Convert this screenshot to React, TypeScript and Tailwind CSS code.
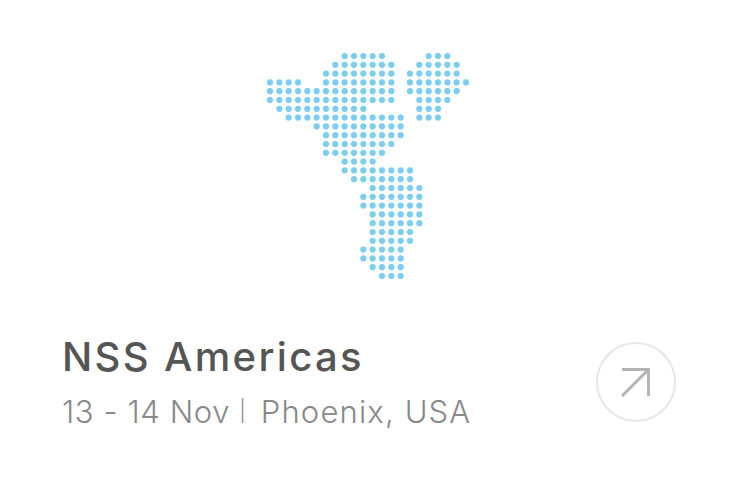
// dot map rows: [first column, last column] runs on the grid
const rows: [number, number][][] = [
  [[8, 12], [17, 19]],
  [[7, 13], [16, 20]],
  [[6, 13], [15, 20]],
  [[0, 3], [6, 13], [15, 21]],
  [[0, 13], [15, 20]],
  [[0, 13], [16, 19]],
  [[1, 10], [16, 18]],
  [[2, 14], [16, 18]],
  [[5, 14]],
  [[6, 14]],
  [[6, 13]],
  [[6, 12]],
  [[8, 11]],
  [[8, 15]],
  [[9, 15]],
  [[11, 16]],
  [[10, 16]],
  [[10, 16]],
  [[11, 16]],
  [[11, 16]],
  [[11, 15]],
  [[11, 15]],
  [[10, 14]],
  [[10, 14]],
  [[11, 14]],
  [[12, 14]],
];

function DotMap() {
  const dots: { x: number; y: number }[] = [];
  rows.forEach((runs, r) => {
    runs.forEach(([a, b]) => {
      for (let c = a; c <= b; c++) dots.push({ x: 4 + c * 9.333, y: 4 + r * 8.8 });
    });
  });
  return (
    <svg width="204" height="228" viewBox="0 0 204 228" className="block">
      {dots.map((d, i) => (
        <circle key={i} cx={d.x} cy={d.y} r="3.1" fill="#7ccdf0" />
      ))}
    </svg>
  );
}

export default function App() {
  return (
    <div className="w-[736px] h-[481px] bg-white flex flex-col overflow-hidden font-['Inter',sans-serif]">
      <div className="flex justify-center pt-[52px]">
        <DotMap />
      </div>
      <div className="flex items-center justify-between pl-[62px] pr-[60px] mt-[54px]">
        <div>
          <h1 className="text-[40px] leading-[46px] font-medium text-[#555555] tracking-[2.35px]">NSS Americas</h1>
          <p className="mt-[13px] text-[31px] leading-[38px] font-light text-[#888888] tracking-[0.6px] whitespace-nowrap">
            13 - 14 Nov <span className="text-[21px] leading-none align-[5px] mr-[5px]">|</span> <span className="tracking-[1.15px]">Phoenix, USA</span>
          </p>
        </div>
        <div className="mb-[2px] w-[80px] h-[80px] rounded-full border-2 border-[#e6e6e6] flex items-center justify-center">
          <svg width="32" height="30" viewBox="0 0 32 30" fill="none" stroke="#b3b3b3" strokeWidth="3">
            <path d="M2 2.5H28.5V29" />
            <path d="M28.5 2.5L2 29" />
          </svg>
        </div>
      </div>
    </div>
  );
}
